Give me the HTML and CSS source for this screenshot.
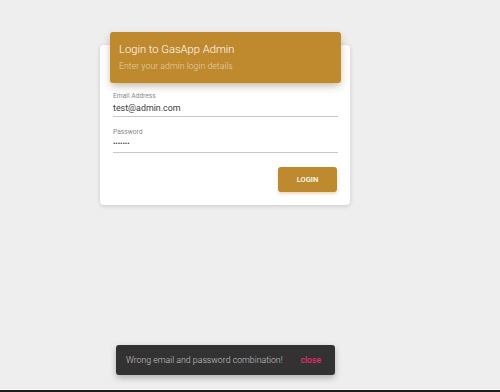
FILE: index.html
```html
<!DOCTYPE html>
<html lang="en">
<head>
  <meta charset="UTF-8">
  <meta name="viewport" content="width=device-width, initial-scale=1">
  <title>GasApp Admin Login</title>
  <link rel="stylesheet" href="styles.css">
</head>
<body>

<!-- Login card -->
<div class="page">
  <div class="card">
    <div class="card-header">
      <h4 class="card-title">Login to GasApp Admin</h4>
      <p class="card-category">Enter your admin login details</p>
    </div>
    <form class="card-body">
      <div class="field">
        <label for="email">Email Address</label>
        <input type="text" id="email" value="test@admin.com">
      </div>
      <div class="field">
        <label for="password">Password</label>
        <input type="password" id="password" value="secret1">
      </div>
      <div class="actions">
        <button type="submit" class="login-btn">Login</button>
      </div>
    </form>
  </div>
</div>

<!-- Snackbar -->
<div class="snackbar">
  <span class="snackbar-text">Wrong email and password combination!</span>
  <button class="snackbar-close">close</button>
</div>

<div class="taskbar"></div>

</body>
</html>
```

FILE: styles.css
```css
* {
  margin: 0;
  padding: 0;
  box-sizing: border-box;
}
body {
  font-family: Roboto, "Liberation Sans", sans-serif;
  background-color: #eeeeee;
  height: 392px;
  overflow: hidden;
}
.page {
  padding: 45px 0 0 100px;
}
.card {
  display: flow-root;
  width: 250px;
  height: 160px;
  background-color: white;
  border-radius: 4px;
  box-shadow: 0 1px 4px rgba(0,0,0,0.16);
  padding: 0 12px 0 13px;
}
.card-header {
  margin: -13px -3px 0 -3px;
  height: 51px;
  background-color: #bf892e;
  border-radius: 3px;
  padding: 11px 9px 0 9px;
  box-shadow: 0 4px 10px rgba(0,0,0,0.14), 0 3px 6px -2px rgba(191,137,46,0.4);
  color: white;
}
.card-title {
  font-size: 11.2px;
  font-weight: 300;
  line-height: 14px;
}
.card-category {
  font-size: 8.8px;
  font-weight: 300;
  line-height: 11px;
  margin-top: 4px;
  color: rgba(255,255,255,0.62);
}
.card-body {
  padding-top: 9px;
}
.field {
  display: flex;
  flex-direction: column;
  margin-bottom: 11px;
}
label {
  font-size: 6.7px;
  color: #8a8a8a;
  line-height: 8px;
}
input {
  font-family: inherit;
  font-size: 8.9px;
  color: #3c3c3c;
  border: none;
  border-bottom: 1px solid #c8c8c8;
  background: none;
  outline: none;
  height: 16px;
  padding: 0 0 1px 0;
  margin-top: 1px;
}
input[type="password"] {
  font-size: 7px;
}
.actions {
  display: flex;
  justify-content: flex-end;
  padding-top: 3px;
  padding-right: 1px;
}
.login-btn {
  width: 59px;
  height: 25px;
  background-color: #bf892e;
  color: white;
  border: none;
  border-radius: 3px;
  font-family: inherit;
  font-size: 7.5px;
  font-weight: 500;
  text-transform: uppercase;
  box-shadow: 0 2px 3px rgba(191,137,46,0.3);
}
.snackbar {
  position: absolute;
  left: 116px;
  top: 345px;
  width: 219px;
  height: 30px;
  background-color: #323232;
  border-radius: 3px;
  box-shadow: 0 3px 6px rgba(0,0,0,0.25);
  display: flex;
  align-items: center;
  padding: 0 14px 0 10px;
}
.snackbar-text {
  font-size: 8.75px;
  font-weight: 300;
  color: rgba(255,255,255,0.72);
}
.snackbar-close {
  margin-left: auto;
  background: none;
  border: none;
  font-family: inherit;
  font-size: 8.6px;
  font-weight: 500;
  color: #e0306f;
}
.taskbar {
  position: absolute;
  left: 0;
  right: 0;
  bottom: 0;
  height: 3px;
  background-color: #1c1f20;
  border-top: 1px solid #fafafa;
}
```
